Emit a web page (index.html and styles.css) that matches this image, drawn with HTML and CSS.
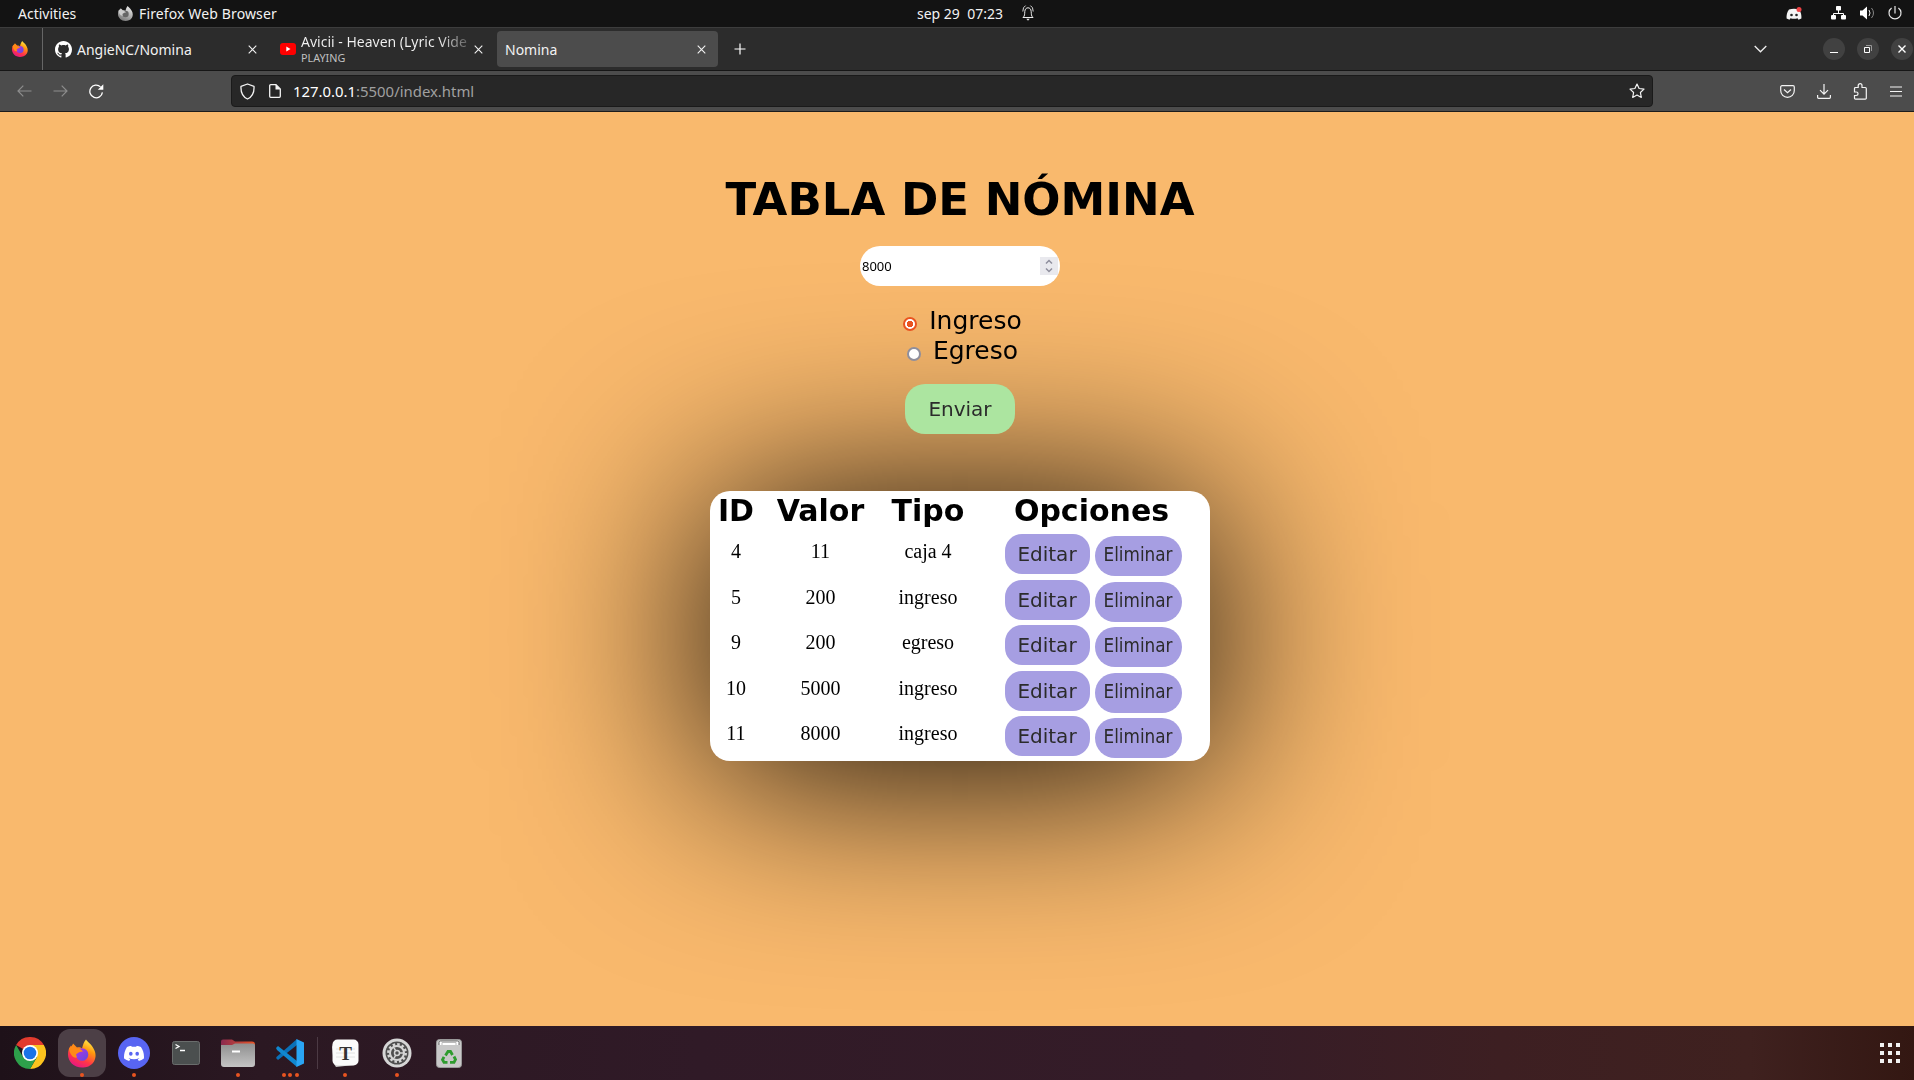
FILE: index.html
```html
<!DOCTYPE html>
<html lang="es">
<head>
<meta charset="utf-8">
<title>Nomina</title>
<link rel="stylesheet" href="styles.css">
</head>
<body>
<svg width="0" height="0" class="defs" aria-hidden="true">
  <defs>
    <linearGradient id="fx-body" x1="0.8" y1="0" x2="0.3" y2="1"><stop offset="0" stop-color="#fff44f"/><stop offset=".35" stop-color="#ff980e"/><stop offset=".7" stop-color="#ff3647"/><stop offset="1" stop-color="#e31587"/></linearGradient>
    <linearGradient id="fx-core" x1="0" y1="0" x2="1" y2="1"><stop offset="0" stop-color="#b833e1"/><stop offset="1" stop-color="#5b4be0"/></linearGradient>
    <linearGradient id="fx-grey" x1="0.8" y1="0" x2="0.3" y2="1"><stop offset="0" stop-color="#f0f0f0"/><stop offset="1" stop-color="#777"/></linearGradient>
    <linearGradient id="steel" x1="0" y1="0" x2="0" y2="1"><stop offset="0" stop-color="#8f8f8f"/><stop offset="1" stop-color="#c4c4c4"/></linearGradient>
    <linearGradient id="folder-back" x1="0" y1="0" x2="1" y2="0"><stop offset="0" stop-color="#8a2a50"/><stop offset="1" stop-color="#ea5425"/></linearGradient>
    <symbol id="close" viewBox="0 0 9 9"><path d="M.7.7l7.6 7.6M8.3.7L.7 8.3" stroke="#f2f2f2" stroke-width="1.1" fill="none"/></symbol>
    <symbol id="fox" viewBox="0 0 28 28"><path d="M18 0c1 2 5 4 7.500 9C28 13 28.300 18 26 22c-3 5-8 6-12 6C6 28 0 22 0 15 0 11 1 8 3 6l.5 3L5 4l4 4c2-.5 4 0 5 1 1-4 2-7 4-9z" fill="url(#fx-body)"/><circle cx="14" cy="15" r="6.300" fill="url(#fx-core)"/><path d="M1 9l4-4 4 4c2 0 5 1 6 3-3 0-5 1-7 3l1 3C5 19 2 15 1 9z" fill="#ff8a16"/></symbol>
    <symbol id="discord" viewBox="0 0 24 18"><path d="M20.300 1.500A20 20 0 0 0 15.300 0l-.7 1.300a18 18 0 0 0-5.300 0L8.600 0a20 20 0 0 0-5 1.500C.6 6.200-.3 10.800.1 15.300A20 20 0 0 0 6.200 18.300l1.300-2-2-1 .5-.4c4 1.800 8 1.800 12 0l.5.4-2 1 1.300 2a20 20 0 0 0 6.100-3C24.400 10 23 5.500 20.300 1.500z" fill="#fff"/></symbol>
  </defs>
</svg>

<header class="topbar">
  <span class="activities">Activities</span>
  <span class="app"><svg width="15" height="15" viewBox="0 0 28 28"><path d="M18 0c1 2 5 4 7.500 9C28 13 28.300 18 26 22c-3 5-8 6-12 6C6 28 0 22 0 15 0 11 1 8 3 6l.5 3L5 4l4 4c2-.5 4 0 5 1 1-4 2-7 4-9z" fill="url(#fx-grey)"/><circle cx="14" cy="15" r="6" fill="#666"/><path d="M1 9l4-4 4 4c2 0 5 1 6 3-3 0-5 1-7 3l1 3C5 19 2 15 1 9z" fill="#ccc"/></svg><span class="app-name">Firefox Web Browser</span></span>
  <span class="clock"><span class="time">sep 29&nbsp; 07:23</span><svg width="12" height="16" viewBox="0 0 12 16" fill="none" stroke="#eee"><path d="M.8 12.500h10.400M1.200 12.300C2.800 11 2.600 9 2.800 6.500 3 4 4.300 2.800 6 2.800S9 4 9.200 6.500C9.400 9 9.200 11 10.800 12.300"/><path d="M.8 6.500Q.8 2 3.600.6M11.200 6.500Q11.200 2 8.400.6" stroke-width=".9"/><path d="M4.300 13.800h3.400L6 15.800z" fill="#eee" stroke="none"/></svg></span>
  <span class="tray">
    <svg class="tray-discord" width="16" height="13" viewBox="0 0 16 13"><path d="M13 2.500Q8 .8 3 2.500C1 5 .3 8.500.6 11.500L3.500 12.700l1-1.500q3.500 1 7 0l1 1.500 2.900-1.200C15.700 8.500 15 5 13 2.500z" fill="#f4f4f4"/><circle cx="5.500" cy="8" r="1.300" fill="#222"/><circle cx="10.500" cy="8" r="1.300" fill="#222"/><circle cx="13" cy="2.600" r="2.500" fill="#ed4245"/></svg>
    <svg class="tray-net" width="15" height="14" viewBox="0 0 15 14"><path d="M2.500 11V7.500h10V11M7.500 3v4.500" stroke="#fff" fill="none"/><rect x="5" width="5" height="4.500" rx=".8" fill="#fff"/><rect y="9" width="5" height="4.500" rx="1" fill="#fff"/><rect x="10" y="9" width="5" height="4.500" rx="1" fill="#fff"/></svg>
    <svg class="tray-vol" width="15" height="14" viewBox="0 0 15 14"><path d="M0 4.500h2.500L7 .5v13L2.500 9.500H0z" fill="#fff"/><path d="M9 4q2 3 0 6" stroke="#eee" fill="none"/><path d="M11.500 2q4 5 0 10" stroke="#888" fill="none"/></svg>
    <svg width="14" height="14" viewBox="0 0 14 14" fill="none" stroke="#e8e8e8" stroke-width="1.200"><path d="M7 0v7.500M3.600 2A6 6 0 1 0 10.400 2"/></svg>
  </span>
</header>

<nav class="tabs">
  <div class="pinned"><svg width="16" height="16"><use href="#fox"/></svg></div>
  <div class="tab tab-github">
    <svg width="17" height="17" viewBox="0 0 16 16"><path fill="#fff" d="M8 0C3.580 0 0 3.580 0 8c0 3.540 2.290 6.530 5.470 7.590.4.070.55-.17.55-.38 0-.19-.01-.82-.01-1.490-2.010.37-2.530-.49-2.690-.94-.09-.23-.48-.94-.82-1.130-.28-.15-.68-.52-.01-.53.63-.01 1.080.58 1.230.82.72 1.210 1.870.87 2.330.66.07-.52.28-.87.51-1.070-1.780-.2-3.640-.89-3.640-3.950 0-.87.31-1.590.82-2.150-.08-.2-.36-1.020.08-2.120 0 0 .67-.21 2.200.82.64-.18 1.320-.27 2-.27s1.360.09 2 .27c1.530-1.040 2.200-.82 2.200-.82.44 1.100.16 1.920.08 2.120.51.56.82 1.270.82 2.150 0 3.070-1.870 3.750-3.650 3.950.29.25.54.73.54 1.480 0 1.070-.01 1.930-.01 2.200 0 .21.15.46.55.38A8 8 0 0 0 16 8c0-4.420-3.580-8-8-8z"/></svg>
    <span class="tab-title t-github">AngieNC/Nomina</span>
    <svg class="x" width="9" height="9"><use href="#close"/></svg>
  </div>
  <div class="tab tab-video">
    <svg width="16" height="12" viewBox="0 0 16 12"><rect width="16" height="12" rx="3" fill="#f00"/><path d="M6.300 3.500v5L10.500 6z" fill="#fff"/></svg>
    <div class="video-text"><span class="tab-title t-video">Avicii - Heaven (Lyric Vide</span><span class="playing">PLAYING</span></div>
    <svg class="x" width="9" height="9"><use href="#close"/></svg>
  </div>
  <div class="tab tab-active"><span class="tab-title t-nomina">Nomina</span><svg class="x" width="9" height="9"><use href="#close"/></svg></div>
  <svg class="plus" width="12" height="12" viewBox="0 0 12 12"><path d="M6 .5v11M.5 6h11" stroke="#fff" stroke-width="1.200"/></svg>
  <svg class="chevron" width="13" height="8" viewBox="0 0 13 8"><path d="M.7 1l5.800 5.800L12.300 1" fill="none" stroke="#eee" stroke-width="1.300"/></svg>
  <div class="winctl">
    <span><svg width="8" height="8"><path d="M0 7.500h8" stroke="#fff"/></svg></span>
    <span><svg width="8" height="8"><path d="M.5 2.500h5v5h-5z" fill="none" stroke="#fff"/><path d="M2 .5h5.500V6" fill="none" stroke="#999"/></svg></span>
    <span><svg width="8" height="8"><path d="M.5.5l7 7M7.500.5l-7 7" stroke="#fff" stroke-width="1.400"/></svg></span>
  </div>
</nav>

<div class="toolbar">
  <svg class="back" width="15" height="12" viewBox="0 0 15 12" fill="none" stroke="#8d8d8d" stroke-width="1.200"><path d="M14.500 6H1M6.300.7L1 6l5.300 5.300"/></svg>
  <svg class="fwd" width="15" height="12" viewBox="0 0 15 12" fill="none" stroke="#8d8d8d" stroke-width="1.200"><path d="M.5 6H14M8.700.7L14 6 8.700 11.300"/></svg>
  <svg class="reload" width="15" height="15" viewBox="0 0 15 15"><path d="M13.400 8.300A6.300 6.300 0 1 1 11.500 2.900" fill="none" stroke="#fff" stroke-width="1.300"/><path d="M14.300.3v5.500H8.800z" fill="#fff"/></svg>
  <div class="urlbar">
    <svg width="15" height="17" viewBox="0 0 15 17"><path d="M7.500 1L14 3.300C14.400 9.500 12 14 7.500 16 3 14 .6 9.500 1 3.300z" fill="none" stroke="#f4f4f4" stroke-width="1.300" stroke-linejoin="round"/></svg>
    <svg class="page" width="12" height="14" viewBox="0 0 12 14"><path d="M1.700.7H7L11.300 5v7.300a1 1 0 0 1-1 1H1.700a1 1 0 0 1-1-1V1.700a1 1 0 0 1 1-1z" fill="none" stroke="#f4f4f4" stroke-width="1.300"/><path d="M6.500.5v5h5z" fill="#f4f4f4"/></svg>
    <span class="url"><b>127.0.0.1</b>:5500/index.html</span>
    <svg class="star" width="16" height="16" viewBox="0 0 16 16"><path d="M8 1l2.100 4.500 4.900.6-3.600 3.400.9 4.900L8 12l-4.300 2.400.9-4.900L1 6.100l4.900-.6z" fill="none" stroke="#f4f4f4" stroke-width="1.200" stroke-linejoin="round"/></svg>
  </div>
  <div class="tools">
    <svg width="15" height="13" viewBox="0 0 15 13" fill="none" stroke="#f4f4f4" stroke-width="1.200"><path d="M2 .7h11a1.300 1.300 0 0 1 1.300 1.300v3.500c0 4-3 6.800-6.800 6.800S.7 9.500.7 5.500V2A1.300 1.300 0 0 1 2 .7z"/><path d="M4 4.500l3.500 3.200L11 4.500"/></svg>
    <svg width="14" height="15" viewBox="0 0 14 15" fill="none" stroke="#f4f4f4" stroke-width="1.200"><path d="M7 0v10M3 6.200l4 4 4-4M.6 11v2.300a1 1 0 0 0 1 1h10.800a1 1 0 0 0 1-1V11"/></svg>
    <svg width="15" height="17" viewBox="0 0 15 17" fill="none" stroke="#f4f4f4" stroke-width="1.200"><path d="M1.500 9V5.500a1 1 0 0 1 1-1H5.200V2.600a1.900 1.900 0 0 1 3.800 0v1.900h3.300a1 1 0 0 1 1 1v9.700a1 1 0 0 1-1 1H2.500a1 1 0 0 1-1-1V12.500h1.800a1.700 1.700 0 0 0 0-3.500z"/></svg>
    <svg width="12" height="11" stroke="#f4f4f4" stroke-width="1.200"><path d="M0 1h12M0 5.500h12M0 10h12"/></svg>
  </div>
</div>

<main>
  <h1>TABLA DE NÓMINA</h1>
  <div class="amount"><span>8000</span><svg width="18" height="18"><rect width="18" height="18" fill="#e9e9ee"/><path d="M6 6.500l3-3 3 3M6 11.500l3 3 3-3" fill="none" stroke="#8f8f9d" stroke-width="1.500"/></svg></div>
  <div class="radios">
    <div class="radio"><i class="dot on"></i>Ingreso</div>
    <div class="radio"><i class="dot"></i>Egreso</div>
  </div>
  <button class="send">Enviar</button>
  <section class="card">
    <div class="row head"><span>ID</span><span>Valor</span><span>Tipo</span><span>Opciones</span></div>
    <div class="row"><span>4</span><span>11</span><span>caja 4</span><div class="opts"><button class="edit">Editar</button><button class="del">Eliminar</button></div></div>
    <div class="row"><span>5</span><span>200</span><span>ingreso</span><div class="opts"><button class="edit">Editar</button><button class="del">Eliminar</button></div></div>
    <div class="row"><span>9</span><span>200</span><span>egreso</span><div class="opts"><button class="edit">Editar</button><button class="del">Eliminar</button></div></div>
    <div class="row"><span>10</span><span>5000</span><span>ingreso</span><div class="opts"><button class="edit">Editar</button><button class="del">Eliminar</button></div></div>
    <div class="row"><span>11</span><span>8000</span><span>ingreso</span><div class="opts"><button class="edit">Editar</button><button class="del">Eliminar</button></div></div>
  </section>
</main>

<footer class="dock">
  <div class="slot"><svg width="32" height="32" viewBox="0 0 32 32"><path d="M16 16L2.140 8A16 16 0 0 1 29.860 8z" fill="#e33b2e"/><path d="M16 8h13.860A16 16 0 0 1 16 32L23 20z" fill="#fcc31e"/><path d="M2.140 8A16 16 0 0 0 16 32l7-12H9z" fill="#2da04b"/><circle cx="16" cy="16" r="8" fill="#fff"/><circle cx="16" cy="16" r="6.300" fill="#1a73e8"/></svg></div>
  <div class="slot active"><svg width="28" height="29"><use href="#fox"/></svg><div class="dots"><i></i></div></div>
  <div class="slot"><svg width="32" height="32" viewBox="0 0 32 32"><circle cx="16" cy="16" r="16" fill="#5865f2"/><svg x="6" y="8.500" width="20" height="15.500" viewBox="0 0 24 18.500"><use href="#discord" width="24" height="18.500"/></svg><ellipse cx="12.800" cy="16.700" rx="1.800" ry="2" fill="#5865f2"/><ellipse cx="19.200" cy="16.700" rx="1.800" ry="2" fill="#5865f2"/></svg><div class="dots"><i></i></div></div>
  <div class="slot"><svg width="28" height="24"><rect x=".5" y=".5" width="27" height="23" rx="2" fill="#4b4f4f" stroke="#6a6d6c"/><path d="M3.500 3.500L7 5.500l-3.500 2M8 9.500h5" fill="none" stroke="#fff" stroke-width="1.300"/></svg></div>
  <div class="slot"><svg width="34" height="28"><path d="M0 5V2.500A2 2 0 0 1 2 .5h9l3 2h17a3 3 0 0 1 3 3V12H0z" fill="url(#folder-back)"/><path d="M0 6h11l3-1.500h18a2 2 0 0 1 2 2V25a3 3 0 0 1-3 3H3a3 3 0 0 1-3-3z" fill="url(#steel)"/><path d="M11 12.500h8" stroke="#fff" stroke-width="2"/></svg><div class="dots"><i></i></div></div>
  <div class="slot"><svg width="28" height="28" viewBox="0 0 28 28"><path d="M0 19l2 2 19-15V0L1 17.500z" fill="#0a70b8"/><path d="M0 9l2-2 19 15v6L1 11z" fill="#1087d0"/><path d="M20.500 0L28 3.500v21L20.500 28z" fill="#2aa5f4"/></svg><div class="dots"><i></i><i></i><i></i></div></div>
  <span class="sep"></span>
  <div class="slot"><svg width="28" height="28"><path d="M3 3L1 8l2 17 2 3 18-2z" fill="#ccc"/><rect x="1.500" y=".5" width="26" height="26" rx="5" fill="#fbfbfb"/><path d="M5 10h19M5 14h19M5 18h19" stroke="#e2e2e2"/><text x="14.500" y="20.500" text-anchor="middle" class="typora">T</text></svg><div class="dots"><i></i></div></div>
  <div class="slot"><svg width="30" height="30" viewBox="0 0 30 30"><circle cx="15" cy="15" r="14.500" fill="#d6d6d6"/><circle cx="15" cy="15" r="11.500" fill="#4f4f4f"/><circle cx="15" cy="15" r="8.700" fill="none" stroke="#d6d6d6" stroke-width="2.500" stroke-dasharray="2.500 2.050"/><circle cx="15" cy="15" r="7" fill="none" stroke="#d6d6d6" stroke-width="2"/><path d="M15 15h6M15 15l-3-5.200M15 15l-3 5.200" stroke="#d6d6d6" stroke-width="1.500"/><circle cx="15" cy="15" r="2.500" fill="#4f4f4f" stroke="#d6d6d6" stroke-width="1.500"/></svg><div class="dots"><i></i></div></div>
  <div class="slot"><svg width="26" height="29"><rect x=".5" y=".5" width="25" height="28" rx="3" fill="#c8c8c8" stroke="#999"/><path d="M3 6V3.500A1.500 1.500 0 0 1 4.500 2h17A1.500 1.500 0 0 1 23 3.500V6" fill="#fff" stroke="#666"/><path d="M6 6V3.500h14V6" fill="none" stroke="#bbb"/><g fill="none" stroke="#2e9b2e" stroke-width="2.800"><path d="M9.500 16.500L12 12.500h2.500l2 3.500M18 17.500l1.500 3-1.500 2.800h-4M11.500 23.300H8l-1.500-2.500 1.500-3"/></g></svg></div>
  <svg class="grid" width="20" height="20" fill="#f2f2f2"><path d="M0 0h4v4H0zM8 0h4v4H8zM16 0h4v4h-4zM0 8h4v4H0zM8 8h4v4H8zM16 8h4v4h-4zM0 16h4v4H0zM8 16h4v4H8zM16 16h4v4h-4z"/></svg>
</footer>
</body>
</html>
```
FILE: styles.css
```css
* { box-sizing: border-box; }
body {
  margin: 0;
  width: 1914px;
  height: 1080px;
  overflow: hidden;
  display: grid;
  grid-template-rows: 27px 44px 41px 914px 54px;
  font-family: "Noto Sans", "Open Sans", sans-serif;
  font-size: 14px;
  color: #f2f2f2;
}
svg { display: block; flex: none; }
.defs { position: absolute; }
span { white-space: nowrap; }

/* desktop bar */
.topbar {
  display: grid;
  grid-template-columns: 118px 799px 800px 197px;
  align-items: center;
  padding-bottom: 1px;
  background: #131313;
}
.activities { padding-left: 18px; }
.app { display: flex; align-items: center; gap: 6px; }
.app-name { letter-spacing: .13px; }
.clock { display: flex; align-items: center; gap: 19px; }
.tray { display: flex; align-items: center; padding-left: 69px; }
.tray-discord { margin-right: 29px; }
.tray-net { margin-right: 14px; }
.tray-vol { margin-right: 13px; }

/* tab strip */
.tabs {
  display: flex;
  align-items: center;
  background: #2c2c2c;
  border-top: 1px solid #3d3d3d;
  border-bottom: 1px solid #161616;
}
.pinned {
  width: 43px;
  height: 42px;
  padding-left: 12px;
  display: flex;
  align-items: center;
  border-right: 1px solid #666;
}
.tab { display: flex; align-items: center; height: 36px; }
.tab .x { margin-left: auto; }
.tab-github { width: 214px; padding-left: 12px; gap: 5px; }
.tab-video { width: 224px; padding: 0 3px 0 23px; gap: 5px; }
.video-text { display: flex; flex-direction: column; padding-bottom: 1px; }
.tab-title { line-height: 18px; padding-top: 1px; }
.t-video {
  width: 168px;
  padding: 0;
  overflow: hidden;
  background: linear-gradient(90deg, #f2f2f2 82%, #555);
  background-clip: text;
  color: transparent;
}
.playing { font-size: 10.800px; line-height: 13px; color: #c0c0c0; }
.tab-active {
  width: 221px;
  margin-left: 16px;
  padding: 0 12px 0 8px;
  background: #4c4c4c;
  border-radius: 4px;
}
.plus { margin-left: 16px; }
.chevron { margin-left: 1008px; }
.winctl { display: flex; gap: 12px; margin-left: 56px; }
.winctl span {
  width: 22px;
  height: 22px;
  border-radius: 50%;
  background: #414141;
  display: grid;
  place-items: center;
}

/* navigation toolbar */
.toolbar {
  display: flex;
  align-items: center;
  background: #4c4c4c;
  border-bottom: 1px solid #1c1c1c;
}
.back { margin-left: 17px; }
.fwd { margin-left: 21px; }
.reload { margin-left: 21px; }
.urlbar {
  display: flex;
  align-items: center;
  width: 1422px;
  height: 32px;
  margin-left: 127px;
  padding: 0 7px 0 8px;
  background: #272727;
  border: 1px solid #1a1a1a;
  border-radius: 4px;
}
.page { margin-left: 14px; }
.url { margin-left: 12px; color: #a0a0a0; font-size: 14.900px; }
.url b { font-weight: 400; color: #fff; }
.star { margin-left: auto; }
.tools { display: flex; align-items: center; gap: 22px; margin-left: 127px; }

/* page */
main {
  display: flex;
  flex-direction: column;
  align-items: center;
  padding-left: 6px;
  isolation: isolate;
  background: #f9b96d;
  color: #000;
  overflow: hidden;
}
h1 {
  margin: 62px 0 0;
  font: bold 45px/52px "DejaVu Sans", sans-serif;
  white-space: nowrap;
}
.amount {
  display: flex;
  align-items: center;
  justify-content: space-between;
  width: 200px;
  height: 40px;
  margin-top: 20px;
  padding: 0 2px;
  background: #fff;
  border-radius: 20px;
  font-size: 13px;
}
.radios { margin-top: 20px; padding-left: 5px; }
.radio {
  display: flex;
  align-items: center;
  justify-content: center;
  gap: 12px;
  height: 30px;
  font: 25px/30px "DejaVu Sans", sans-serif;
}
.dot {
  width: 14px;
  height: 14px;
  margin-top: 6px;
  border: 2px solid #8f8f9d;
  border-radius: 50%;
  background: #fff;
}
.dot.on { border-color: #e95420; background: radial-gradient(circle, #e95420 3px, #fff 3.500px); }
button { border: 0; padding: 0; color: #2b2b2b; font-family: "DejaVu Sans", sans-serif; }
.send {
  width: 110px;
  height: 50px;
  margin-top: 18px;
  border-radius: 20px;
  background: #ace5a0;
  font-size: 20px;
}
.card {
  position: relative;
  width: 500px;
  height: 270px;
  margin-top: 57px;
  background: #fff;
  border-radius: 20px;
}
.card::before {
  content: "";
  position: absolute;
  z-index: -1;
  inset: 10px 0 -10px;
  border-radius: 20px;
  background: #000;
  filter: blur(100px);
  will-change: filter;
}
.row {
  display: grid;
  grid-template-columns: 52px 117px 98px 229px;
  justify-items: center;
  height: 45.500px;
  font: 20px/23px "Liberation Serif", serif;
}
.row > span { margin-top: 8px; }
.head { height: 41px; font: bold 30px/34px "DejaVu Sans", sans-serif; }
.head > span { margin-top: 3px; }
.opts { display: flex; gap: 5px; padding-left: 3px; margin-top: 2px; }
.edit { width: 85px; height: 40px; border-radius: 17px; background: #a69ee2; font-size: 20px; }
.del {
  width: 87px;
  height: 40px;
  margin-top: 2px;
  padding-bottom: 3px;
  border-radius: 20px;
  background: #a69ee2;
  font: 18.700px "DejaVu Sans Condensed", "DejaVu Sans", sans-serif;
  font-stretch: condensed;
}

/* dock */
.dock {
  display: flex;
  align-items: center;
  padding: 0 14px 0 6px;
  gap: 4px;
  background: linear-gradient(90deg, #1e1119 0, #2b1822 260px, #301a27 700px, #351c28 1200px, #3d1f22 1500px, #3f211f 1750px, #331712 1914px);
}
.slot {
  position: relative;
  display: grid;
  place-items: center;
  width: 48px;
  height: 48px;
  border-radius: 12px;
}
.active { background: #4c3f46; }
.dots {
  position: absolute;
  inset: auto 0 0;
  display: flex;
  justify-content: center;
  gap: 2.500px;
}
.dots i { width: 4px; height: 4px; border-radius: 50%; background: #e95420; }
.sep { width: 1px; height: 32px; background: #4c3a44; margin: 0 -1px; }
.typora { font: bold 19px "Liberation Serif", serif; fill: #333; }
.grid { margin-left: auto; }
```
